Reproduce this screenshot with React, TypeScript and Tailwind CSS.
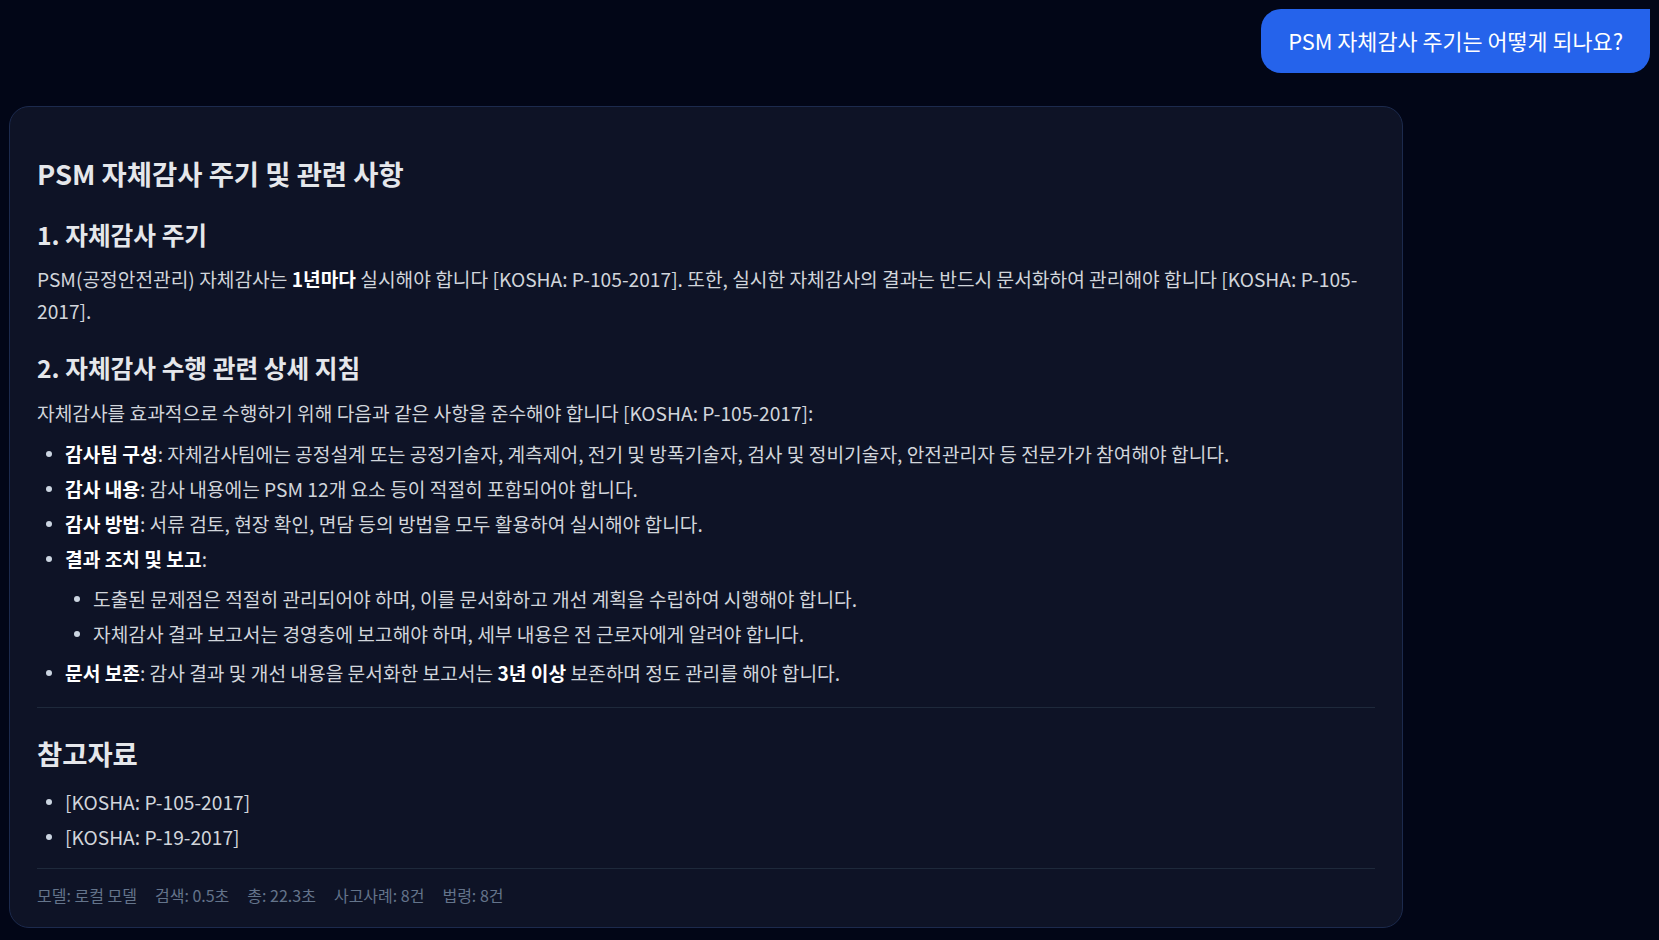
import React from 'react';

const FONT = "font-['Noto_Sans_CJK_KR','Noto_Sans',sans-serif]";

function Bullet({ children }: { children: React.ReactNode }) {
  return (
    <li className="flex items-start leading-[32px]">
      <span className="flex h-[32px] w-[20px] shrink-0 items-center pl-[1px]">
        <span className="h-[6px] w-[6px] rounded-full bg-[#cbd5e1]" />
      </span>
      <span className="min-w-0">{children}</span>
    </li>
  );
}

function B({ children }: { children: React.ReactNode }) {
  return <strong className="font-bold text-white">{children}</strong>;
}

export default function App() {
  return (
    <div className={`min-h-screen bg-[#020617] ${FONT}`}>
      <div className="flex justify-end pt-[9px] pr-[9px]">
        <div className="flex h-[64px] items-center rounded-[20px] rounded-tr-none bg-[#2563eb] px-[27px] text-[21.8px] text-white">
          PSM 자체감사 주기는 어떻게 되나요?
        </div>
      </div>

      <div className="mt-[33px] ml-[9px] w-[1394px] rounded-[20px] border border-[#1c2a4d] bg-[#0e1326] px-[27px] pt-[48px] pb-[20px] text-[19.2px] text-[#d1d5db]">
        <h2 className="text-[27.4px] font-bold leading-[36px] text-[#e5e7eb]">PSM 자체감사 주기 및 관련 사항</h2>

        <h3 className="mt-[27px] text-[24.7px] font-bold leading-[32px] text-[#e5e7eb]">1. 자체감사 주기</h3>
        <p className="mt-[13px] leading-[32px]">
          PSM(공정안전관리) 자체감사는 <B>1년마다</B> 실시해야 합니다 [KOSHA: P-105-2017]. 또한, 실시한 자체감사의 결과는 반드시
          문서화하여 관리해야 합니다 [KOSHA: P-105-2017].
        </p>

        <h3 className="mt-[24px] text-[24.7px] font-bold leading-[32px] text-[#e5e7eb]">2. 자체감사 수행 관련 상세 지침</h3>
        <p className="mt-[14px] leading-[32px]">
          자체감사를 효과적으로 수행하기 위해 다음과 같은 사항을 준수해야 합니다 [KOSHA: P-105-2017]:
        </p>

        <ul className="mt-[9px] flex flex-col gap-[3px] pl-[8px]">
          <Bullet>
            <B>감사팀 구성</B>: 자체감사팀에는 공정설계 또는 공정기술자, 계측제어, 전기 및 방폭기술자, 검사 및 정비기술자, 안전관리자 등
            전문가가 참여해야 합니다.
          </Bullet>
          <Bullet>
            <B>감사 내용</B>: 감사 내용에는 PSM 12개 요소 등이 적절히 포함되어야 합니다.
          </Bullet>
          <Bullet>
            <B>감사 방법</B>: 서류 검토, 현장 확인, 면담 등의 방법을 모두 활용하여 실시해야 합니다.
          </Bullet>
          <li className="leading-[32px]">
            <div className="flex items-start">
              <span className="flex h-[32px] w-[20px] shrink-0 items-center pl-[1px]">
                <span className="h-[6px] w-[6px] rounded-full bg-[#cbd5e1]" />
              </span>
              <span>
                <B>결과 조치 및 보고</B>:
              </span>
            </div>
            <ul className="mt-[8px] mb-[4px] flex flex-col gap-[3px] pl-[28px]">
              <Bullet>도출된 문제점은 적절히 관리되어야 하며, 이를 문서화하고 개선 계획을 수립하여 시행해야 합니다.</Bullet>
              <Bullet>자체감사 결과 보고서는 경영층에 보고해야 하며, 세부 내용은 전 근로자에게 알려야 합니다.</Bullet>
            </ul>
          </li>
          <Bullet>
            <B>문서 보존</B>: 감사 결과 및 개선 내용을 문서화한 보고서는 <B>3년 이상</B> 보존하며 정도 관리를 해야 합니다.
          </Bullet>
        </ul>

        <hr className="mt-[18px] border-0 border-t border-[#1e293b]" />

        <h2 className="mt-[27px] text-[27.4px] font-bold leading-[36px] text-[#e5e7eb]">참고자료</h2>
        <ul className="mt-[15px] flex flex-col gap-[3px] pl-[8px]">
          <Bullet>[KOSHA: P-105-2017]</Bullet>
          <Bullet>[KOSHA: P-19-2017]</Bullet>
        </ul>

        <hr className="mt-[15px] border-0 border-t border-[#1e293b]" />

        <div className="mt-[14px] flex gap-[18px] text-[16px] leading-[24px] text-[#64748b]">
          <span>모델: 로컬 모델</span>
          <span>검색: 0.5초</span>
          <span>총: 22.3초</span>
          <span>사고사례: 8건</span>
          <span>법령: 8건</span>
        </div>
      </div>
    </div>
  );
}
